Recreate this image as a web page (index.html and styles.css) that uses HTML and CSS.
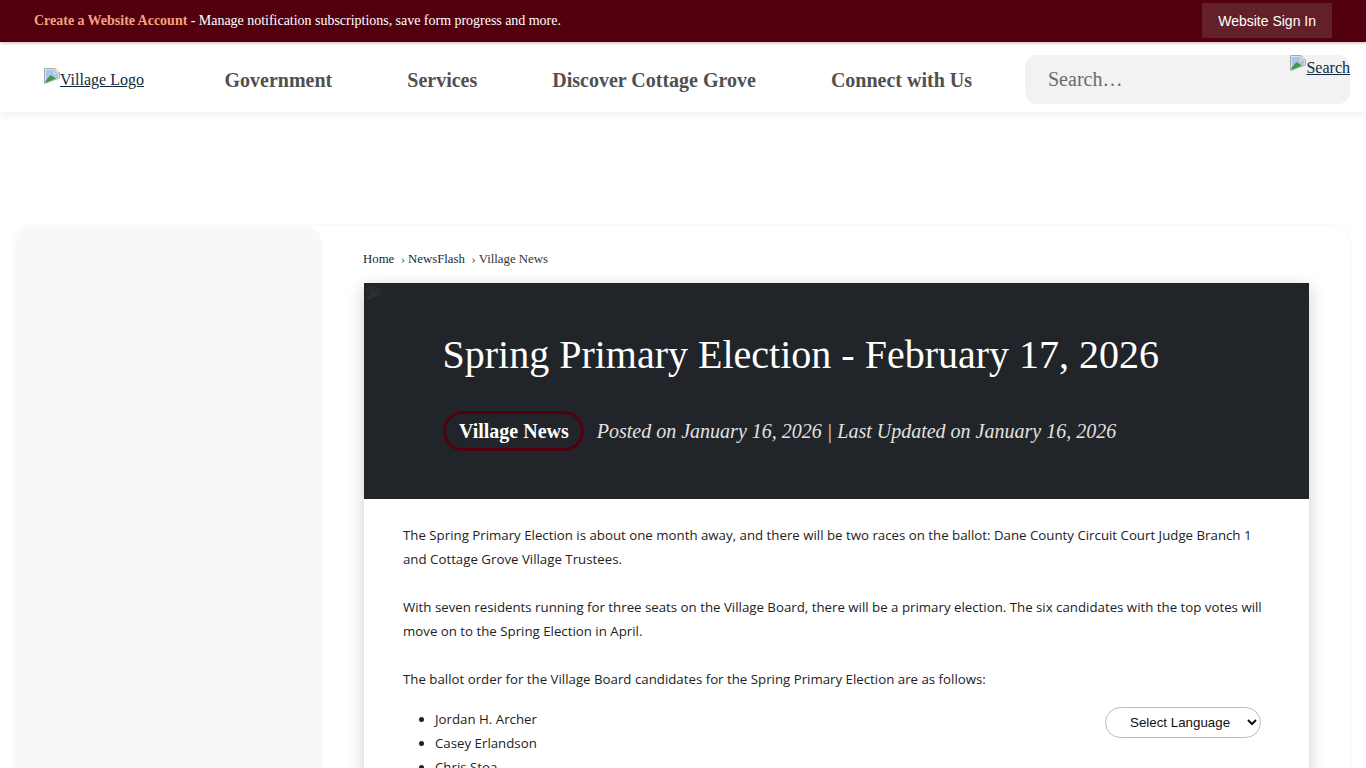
FILE: index.html
```html
<!DOCTYPE html>
<html lang="en">
<head>
    <meta charset="UTF-8">
    <meta name="viewport" content="width=device-width, initial-scale=1.0">
    <title>Spring Primary Election - February 17, 2026</title>
    <link rel="stylesheet" href="styles.css">
</head>
<body>
    <div class="top-bar">
        <p class="top-message"><a href="#">Create a Website Account</a> - Manage notification subscriptions, save form progress and more.</p>
        <a class="sign-in" href="#">Website Sign In</a>
    </div>
    <header class="site-header">
        <a class="logo-link" href="#"><svg class="broken-img" viewBox="0 0 16 16"><path d="M.5.5H11L15.500 5V10L.5 15.500z" fill="#fff" stroke="#aaa"/><path d="M11 .5V5h4.500" fill="#e6e6e6" stroke="#aaa"/><path d="M1.500 1.500h8.500v4.500h4.500v3.500L1.500 15z" fill="#a9c4ee"/><path d="M1.500 15V13L6.500 7l5.500 3.400z" fill="#3f9a3a"/></svg>Village Logo</a>
        <nav class="main-nav">
            <a href="#">Government</a>
            <a href="#">Services</a>
            <a href="#">Discover Cottage Grove</a>
            <a href="#">Connect with Us</a>
        </nav>
        <div class="search-box">
            <span class="search-placeholder">Search…</span>
            <a class="search-link" href="#"><svg class="broken-img" viewBox="0 0 16 16"><path d="M.5.5H11L15.500 5V10L.5 15.500z" fill="#fff" stroke="#aaa"/><path d="M11 .5V5h4.500" fill="#e6e6e6" stroke="#aaa"/><path d="M1.500 1.500h8.500v4.500h4.500v3.500L1.500 15z" fill="#a9c4ee"/><path d="M1.500 15V13L6.500 7l5.500 3.400z" fill="#3f9a3a"/></svg>Search</a>
        </div>
    </header>

    <div class="page-card">
        <aside class="side-col"></aside>
        <main class="main-col">
            <div class="breadcrumbs">
                <a href="#">Home</a><span class="sep">›</span><a href="#">NewsFlash</a><span class="sep">›</span><a href="#">Village News</a>
            </div>
            <article class="article">
                <div class="hero">
                    <svg class="hero-img" viewBox="0 0 16 16"><path d="M.5.5H11L15.500 5V10L.5 15.500z" fill="#272b2f"/><path d="M1.500 15V13L6.500 7l5.500 3.400z" fill="#2a352b"/></svg>
                    <h1>Spring Primary Election - February 17, 2026</h1>
                    <div class="hero-meta">
                        <span class="category">Village News</span>
                        <span class="posted">Posted on January 16, 2026 | Last Updated on January 16, 2026</span>
                    </div>
                </div>
                <div class="article-body">
                    <p>The Spring Primary Election is about one month away, and there will be two races on the ballot: Dane County Circuit Court Judge Branch 1 and Cottage Grove Village Trustees.</p>
                    <p>With seven residents running for three seats on the Village Board, there will be a primary election. The six candidates with the top votes will move on to the Spring Election in April.</p>
                    <p>The ballot order for the Village Board candidates for the Spring Primary Election are as follows:</p>
                    <ul>
                        <li>Jordan H. Archer</li>
                        <li>Casey Erlandson</li>
                        <li>Chris Stoa</li>
                    </ul>
                </div>
            </article>
        </main>
    </div>

    <select class="lang-select">
        <option>Select Language</option>
    </select>
</body>
</html>
```

FILE: styles.css
```css
html, body {
    height: 768px;
    overflow: hidden;
}

body {
    font-family: "Liberation Serif", "Times New Roman", serif;
    margin: 0;
    padding: 0;
    background-color: #fff;
    color: #212529;
}

a {
    color: #0f2a40;
}

.top-bar {
    height: 42px;
    background-color: #52000f;
    display: flex;
    align-items: center;
    justify-content: space-between;
    padding: 0 34px;
    color: #fff;
    position: relative;
    z-index: 2;
    box-shadow: 0 1px 3px rgba(82, 0, 15, 0.3);
}

.top-message {
    margin: 0;
    font-size: 14px;
    letter-spacing: -0.01px;
    word-spacing: -0.1px;
}

.top-message a {
    color: #f5a27c;
    font-weight: 700;
    text-decoration: none;
}

.sign-in {
    background-color: #642029;
    color: #fff;
    font-family: "Liberation Sans", Arial, sans-serif;
    font-size: 14px;
    text-decoration: none;
    height: 35px;
    line-height: 36px;
    padding: 0 16px;
    margin-top: -1px;
}

.site-header {
    height: 70px;
    background-color: #fff;
    box-shadow: 0 2px 10px rgba(0, 0, 0, 0.08);
    display: flex;
    align-items: center;
    padding: 0 16px 0 44px;
    position: relative;
    z-index: 1;
}

.logo-link {
    font-size: 16px;
    width: 180.5px;
    flex: none;
    align-self: flex-start;
    margin-top: 26px;
}

.logo-link .broken-img {
    vertical-align: 1px;
}

.broken-img {
    width: 16px;
    height: 16px;
    vertical-align: 2px;
}

.main-nav {
    display: flex;
    gap: 75px;
    flex: none;
    width: 800px;
    padding-top: 6px;
}

.main-nav a {
    font-size: 20px;
    font-weight: 700;
    color: #505050;
    text-decoration: none;
}

.search-box {
    position: absolute;
    left: 1025px;
    top: 13px;
    width: 325px;
    height: 49px;
    background-color: #f2f2f2;
    border-radius: 12px;
    display: flex;
    align-items: center;
    padding-left: 23px;
    box-sizing: border-box;
}

.search-placeholder {
    font-size: 20px;
    color: #6b6b6b;
}

.search-link {
    position: absolute;
    top: 0;
    right: 0;
    font-size: 16px;
}

.page-card {
    margin: 114px 16px 0 15px;
    display: flex;
    height: 700px;
    border-radius: 20px;
    box-shadow: 0 0 6px rgba(0, 0, 0, 0.05);
    overflow: hidden;
}

.side-col {
    width: 308px;
    flex: none;
    background-color: #f8f8f8;
    border-radius: 0 20px 0 0;
}

.main-col {
    flex: 1;
    padding: 25px 41px 0 40px;
    min-width: 0;
}

.breadcrumbs {
    font-size: 12.8px;
    height: 32px;
    line-height: 17px;
    color: #333;
}

.breadcrumbs a {
    text-decoration: none;
}

.breadcrumbs a:last-child {
    color: #333;
}

.breadcrumbs .sep {
    margin: 0 3px 0 6.5px;
    color: #555;
}

.article {
    margin-left: 1px;
    box-shadow: 0 4px 16px rgba(0, 0, 0, 0.2);
    background-color: #fff;
}

.hero {
    height: 216px;
    background-color: #212529;
    box-sizing: border-box;
    padding: 47px 40px 0 79px;
    color: #fff;
    position: relative;
}

.hero-img {
    position: absolute;
    left: 2px;
    top: 2px;
    width: 16px;
    height: 16px;
}

.hero h1 {
    margin: 0 0 0 -0.5px;
    font-size: 40px;
    font-weight: 400;
    line-height: 50px;
}

.hero-meta {
    display: flex;
    align-items: center;
    gap: 13px;
    margin-top: 31px;
}

.category {
    border: 3px solid #52000f;
    border-radius: 20px;
    height: 34px;
    line-height: 34px;
    padding: 0 12px 0 13px;
    font-size: 20px;
    font-weight: 700;
}

.posted {
    font-size: 20px;
    font-style: italic;
    color: #e2e2e2;
}

.article-body {
    padding: 24px 40px 24px 39px;
    font-family: "Open Sans", "Noto Sans", sans-serif;
    font-size: 13.27px;
    line-height: 24px;
    color: #222;
}

.article-body p {
    margin: 0 0 24px;
}

.article-body p:nth-child(3) {
    margin-bottom: 16px;
}

.article-body ul {
    margin: 0;
    padding-left: 32px;
}

.lang-select {
    position: fixed;
    left: 1105px;
    top: 707px;
    width: 156px;
    height: 31px;
    border: 1px solid #bbb;
    border-radius: 16px;
    background-color: #fff;
    font-family: "Liberation Sans", Arial, sans-serif;
    font-size: 13.33px;
    color: #111;
    padding: 0 4px 0 20px;
}
```
